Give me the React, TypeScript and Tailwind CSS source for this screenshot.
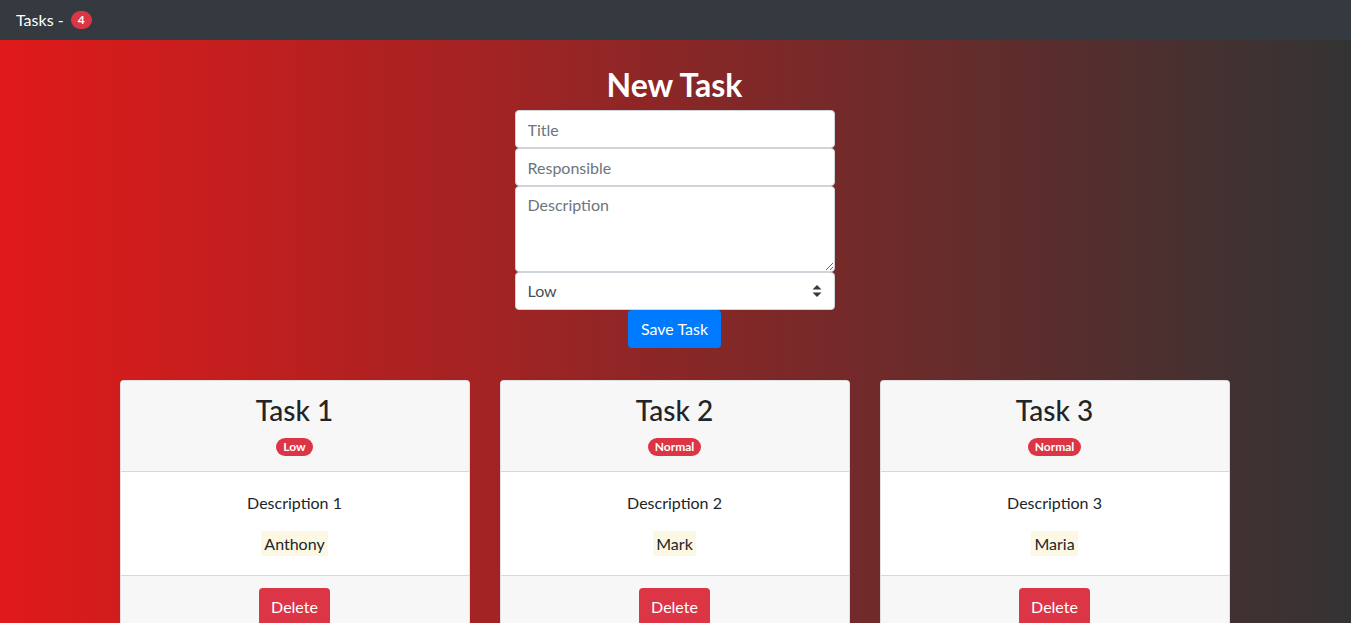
import React from "react";

const tasks = [
  { title: "Task 1", priority: "Low", description: "Description 1", responsible: "Anthony" },
  { title: "Task 2", priority: "Normal", description: "Description 2", responsible: "Mark" },
  { title: "Task 3", priority: "Normal", description: "Description 3", responsible: "Maria" },
];

export default function App() {
  return (
    <div className="min-h-screen font-['Lato','Noto_Sans',sans-serif] text-[#212529]">
      <nav className="h-10 bg-[#343a40] flex items-center px-4">
        <span className="text-white text-base">Tasks -</span>
        <span className="ml-[7px] inline-flex items-center justify-center h-[18px] min-w-[21px] px-[7px] rounded-full bg-[#dc3545] text-white text-[12px] font-bold leading-none">
          4
        </span>
      </nav>
      <main className="bg-[linear-gradient(to_right,#e11a1a,#333333)] min-h-[583px] pb-10 pr-[2px]">
        <div className="pt-[26px] flex flex-col items-center">
          <h1 className="text-white text-[32px] font-bold leading-[38px] mb-[6px]">New Task</h1>
          <form className="w-[320px] flex flex-col items-center" onSubmit={(e) => e.preventDefault()}>
            <input
              placeholder="Title"
              className="w-full h-[38px] bg-white border border-[#ced4da] rounded px-3 text-base text-[#495057] placeholder:text-[#6c757d] outline-none"
            />
            <input
              placeholder="Responsible"
              className="w-full h-[38px] bg-white border border-[#ced4da] rounded px-3 text-base text-[#495057] placeholder:text-[#6c757d] outline-none"
            />
            <textarea
              placeholder="Description"
              className="w-full h-[86px] bg-white border border-[#ced4da] rounded px-3 py-[6px] text-base leading-6 text-[#495057] placeholder:text-[#6c757d] outline-none block"
            />
            <div className="relative w-full h-[38px] bg-white border border-[#ced4da] rounded flex items-center px-3 text-base text-[#495057]">
              <span>Low</span>
              <svg className="absolute right-[12px] top-1/2 -translate-y-1/2" width="10" height="12" viewBox="0 0 10 12">
                <path d="M5 0 L9.5 4.5 H0.5 Z" fill="#343a40" />
                <path d="M5 12 L9.5 7.5 H0.5 Z" fill="#343a40" />
              </svg>
            </div>
            <button
              type="submit"
              className="h-[38px] px-3 rounded bg-[#007bff] text-white text-base w-[93px]"
            >
              Save Task
            </button>
          </form>
        </div>
        <div className="w-[1110px] mx-auto mt-8 grid grid-cols-3 gap-[30px]">
          {tasks.map((t) => (
            <div key={t.title} className="bg-white border border-[rgba(0,0,0,0.125)] rounded overflow-hidden text-center">
              <div className="bg-[#f7f7f7] border-b border-[rgba(0,0,0,0.125)] px-5 py-3">
                <h3 className="text-[28px] leading-[33.6px] font-medium mb-2 pt-[1px]">{t.title}</h3>
                <div className="h-6 flex items-center justify-center -mt-[1px]">
                  <span className="inline-flex items-center h-[18px] px-[7px] rounded-full bg-[#dc3545] text-white text-[12px] font-bold leading-none">
                    {t.priority}
                  </span>
                </div>
              </div>
              <div className="px-5 pt-[19px] pb-5 text-base leading-6">
                <p className="mb-4">{t.description}</p>
                <p className="pt-[1px] -mb-[1px]">
                  <mark className="bg-[#fcf8e3] text-[#212529] px-[3px] py-[3px]">{t.responsible}</mark>
                </p>
              </div>
              <div className="bg-[#f7f7f7] border-t border-[rgba(0,0,0,0.125)] px-5 py-3">
                <button className="h-[38px] px-3 rounded bg-[#dc3545] text-white text-base">Delete</button>
              </div>
            </div>
          ))}
        </div>
      </main>
    </div>
  );
}
